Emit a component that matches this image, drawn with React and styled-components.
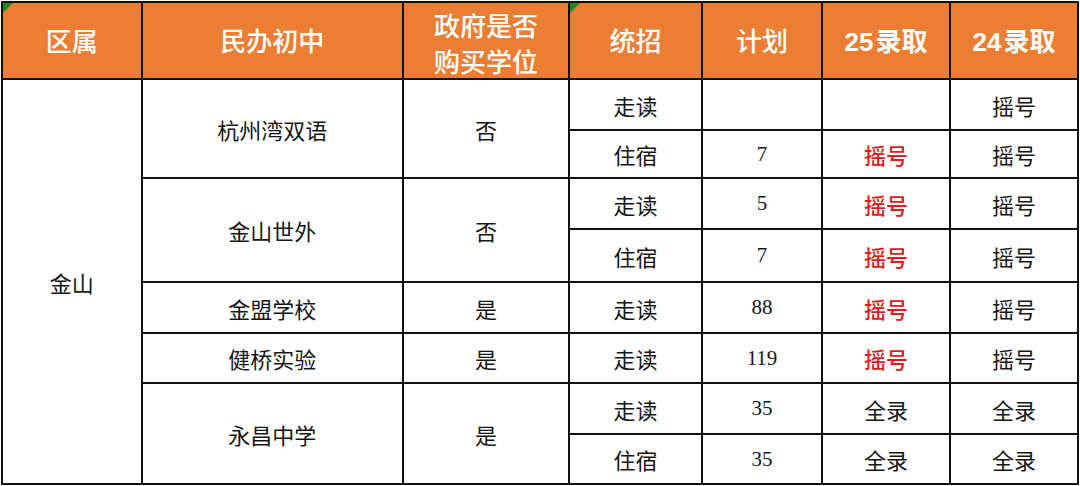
import styled, { createGlobalStyle } from "styled-components";

const GlobalStyle = createGlobalStyle`
  html, body {
    margin: 0;
    padding: 0;
    background: #fff;
  }
  body {
    font-family: "Noto Sans CJK SC", "Liberation Serif", serif;
  }
`;

const ORANGE = "#ec7e34";

const columns = [139.5, 261.5, 166, 133, 120, 128, 128];

const rows = [
  { h: 51, district: "金山", school: "杭州湾双语", span: 2, buy: "否", mode: "走读", plan: "", y25: "", y24: "摇号" },
  { h: 48, mode: "住宿", plan: "7", y25: "摇号", y24: "摇号" },
  { h: 51, school: "金山世外", span: 2, buy: "否", mode: "走读", plan: "5", y25: "摇号", y24: "摇号" },
  { h: 53, mode: "住宿", plan: "7", y25: "摇号", y24: "摇号" },
  { h: 51, school: "金盟学校", span: 1, buy: "是", mode: "走读", plan: "88", y25: "摇号", y24: "摇号" },
  { h: 50, school: "健桥实验", span: 1, buy: "是", mode: "走读", plan: "119", y25: "摇号", y24: "摇号" },
  { h: 51, school: "永昌中学", span: 2, buy: "是", mode: "走读", plan: "35", y25: "全录", y24: "全录" },
  { h: 50, mode: "住宿", plan: "35", y25: "全录", y24: "全录" },
];

const App = () => {
  return (
    <>
      <GlobalStyle />
      <Page>
        <Table>
          <colgroup>
            {columns.map((w, i) => (
              <col key={i} style={{ width: w }} />
            ))}
          </colgroup>
          <thead>
            <tr>
              <Th>
                <Marker />
                <HeadInner>区属</HeadInner>
              </Th>
              <Th>
                <HeadInner>民办初中</HeadInner>
              </Th>
              <Th>
                <HeadInner $tight>
                  政府是否
                  <br />
                  购买学位
                </HeadInner>
              </Th>
              <Th>
                <Marker />
                <HeadInner>统招</HeadInner>
              </Th>
              <Th>
                <HeadInner>计划</HeadInner>
              </Th>
              <Th>
                <HeadInner $bold>
                  <Num>25</Num>录取
                </HeadInner>
              </Th>
              <Th>
                <HeadInner $bold>
                  <Num>24</Num>录取
                </HeadInner>
              </Th>
            </tr>
          </thead>
          <tbody>
            {rows.map((r, i) => (
              <tr key={i} style={{ height: r.h }}>
                {i === 0 && <Td rowSpan={rows.length}>{r.district}</Td>}
                {r.school && <Td rowSpan={r.span}>{r.school}</Td>}
                {r.school && <Td rowSpan={r.span}>{r.buy}</Td>}
                <Td>{r.mode}</Td>
                <Td $num>{r.plan}</Td>
                <Td $red={r.y25 === "摇号"}>{r.y25}</Td>
                <Td>{r.y24}</Td>
              </tr>
            ))}
          </tbody>
        </Table>
      </Page>
    </>
  );
};

export default App;

const Page = styled.div`
  padding: 1px 0 0 1px;
  width: 1080px;
  height: 486px;
  box-sizing: border-box;
  overflow: hidden;
`;

const Table = styled.table`
  border-collapse: collapse;
  table-layout: fixed;
  width: 1078px;
`;

const Th = styled.th`
  position: relative;
  background: ${ORANGE};
  border: 2px solid #111;
  padding: 0;
  height: 75px;
`;

const HeadInner = styled.div`
  height: 75px;
  overflow: hidden;
  box-sizing: border-box;
  padding-top: ${(p) => (p.$tight ? "4px" : "22px")};
  color: #fff;
  font-size: 26px;
  font-weight: ${(p) => (p.$bold ? 700 : 500)};
  line-height: ${(p) => (p.$tight ? "36px" : "30px")};
  text-align: center;
  white-space: nowrap;
`;

const Num = styled.span`
  font-family: "Liberation Sans", "Noto Sans", sans-serif;
  font-weight: 700;
  margin-right: 2px;
`;

const Marker = styled.span`
  position: absolute;
  left: 0;
  top: 0;
  width: 0;
  height: 0;
  border-top: 10px solid #1f8a1f;
  border-right: 10px solid transparent;
`;

const Td = styled.td`
  border: 2px solid #111;
  padding: 0;
  text-align: center;
  vertical-align: middle;
  color: ${(p) => (p.$red ? "#e3191c" : "#151515")};
  font-family: ${(p) =>
    p.$num
      ? `"Liberation Serif", "Noto Sans CJK SC", serif`
      : `"Noto Sans CJK SC", "Liberation Serif", serif`};
  font-size: ${(p) => (p.$num ? "21px" : "22px")};
  font-weight: ${(p) => (p.$red ? 500 : 400)};
  line-height: 1;
`;
